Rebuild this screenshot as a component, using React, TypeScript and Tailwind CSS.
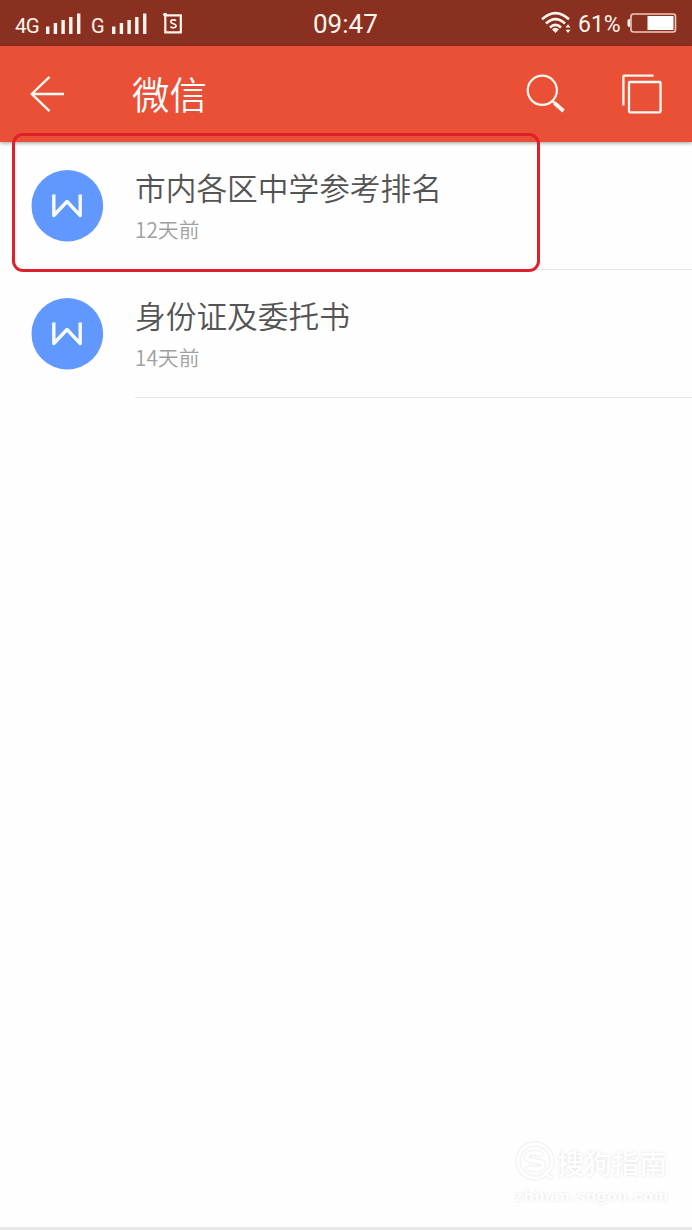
import React from 'react'

const FILES = [
  { name: '市内各区中学参考排名', time: '12天前' },
  { name: '身份证及委托书', time: '14天前' },
]

const SignalBars: React.FC = () => (
  <svg width="35" height="22" viewBox="0 0 35 22" fill="#fff5ec" className="shrink-0">
    <rect x="0" y="13.5" width="3.4" height="7.5" />
    <rect x="7.7" y="10" width="3.4" height="11" />
    <rect x="15.4" y="7" width="3.4" height="14" />
    <rect x="23.1" y="4" width="3.4" height="17" />
    <rect x="31" y="0.5" width="3.4" height="20.5" />
  </svg>
)

const StatusBar: React.FC = () => (
  <div className="flex h-[46px] shrink-0 items-center bg-[#8a3021] font-['Roboto','Liberation_Sans',sans-serif] text-[#fff5ec]">
    <div className="flex w-[313px] items-center pl-[15px] pt-[2px]">
      <span className="w-[31px] pt-[4px] text-[20.5px] leading-none tracking-[-0.7px]">4G</span>
      <SignalBars />
      <span className="ml-[10px] w-[21px] pt-[4px] text-[20px] leading-none">G</span>
      <SignalBars />
      <svg width="20" height="22" viewBox="0 0 20 22" fill="none" stroke="#fff5ec" className="ml-[16px]">
        <path d="M0 1.5H4M2.3 0V19.3H17.8V2.3H1" strokeWidth="2.2" />
        <path d="M13 7.8C12 6.5 7.8 6.3 7.8 8.8C7.8 11.4 13 10 13 12.8C13 15.4 8.6 15.2 7.4 13.6" strokeWidth="1.7" />
      </svg>
    </div>
    <div className="w-[228px] pt-[1px] text-[26px] leading-none">09:47</div>
    <div className="flex items-center">
      <svg width="31" height="24" viewBox="0 0 31 24" fill="none" stroke="#fff5ec" strokeWidth="2.7">
        <path d="M1 8.3Q14.5 -4 28 8.3" />
        <path d="M5 12.4Q14.5 3.8 24 12.4" />
        <path d="M9 16.4Q14.5 11.5 20 16.4" />
        <path d="M11 18.2Q14.5 15.2 18 18.2L14.5 22Z" fill="#fff5ec" stroke="none" />
        <path d="M24.5 16.5L27 13.3L29.5 16.5ZM24.5 18.8H29.5L27 22Z" fill="#fff5ec" stroke="none" />
      </svg>
      <span className="ml-[6px] w-[49px] pt-[3px] text-[23px] leading-none">61%</span>
      <svg width="50" height="22" viewBox="0 0 50 22" className="-mt-[1px]">
        <path d="M3 7H2.5Q0.5 7 0.5 9V13Q0.5 15 2.5 15H3Z" fill="#fff5ec" />
        <rect x="4" y="2" width="44.5" height="18" rx="2.5" fill="none" stroke="#f4c9ba" strokeWidth="1.6" />
        <rect x="20.5" y="4" width="26" height="14" fill="#fff" />
      </svg>
    </div>
  </div>
)

const TitleBar: React.FC = () => (
  <header className="z-10 flex h-[96px] shrink-0 items-center bg-[#ea5036] text-white shadow-[0_1px_4px_rgba(0,0,0,0.4)]">
    <svg width="36" height="38" viewBox="0 0 36 38" fill="none" stroke="#fff8f2" strokeWidth="2.4" className="ml-[30px]">
      <path d="M19.5 1.8L1.8 19L19.5 36.2M1.8 19H34" />
    </svg>
    <h1 className="ml-[66px] w-[394px] pb-[3px] text-[37.5px] font-[350] leading-none">微信</h1>
    <svg width="42" height="42" viewBox="0 0 42 42" fill="none" stroke="#fff8f2" className="-ml-[1px]">
      <circle cx="17.3" cy="17.3" r="14.6" strokeWidth="2.2" />
      <path d="M27 27.5L31 31.5" strokeWidth="2.4" />
      <path d="M29.5 30L38.5 38" strokeWidth="3.8" />
    </svg>
    <svg width="42" height="42" viewBox="0 0 42 42" fill="none" stroke="#fff8f2" strokeWidth="2.3" className="ml-[54px]">
      <path d="M32.5 2.6H3Q2.4 2.6 2.4 3.4V32.5" />
      <rect x="8" y="9" width="31.5" height="30.3" rx="1" />
    </svg>
  </header>
)

const FileRow: React.FC<{ name: string; time: string }> = ({ name, time }) => (
  <li className="flex h-[128px] pl-[31px]">
    <svg width="72" height="72" viewBox="0 0 72 72" fill="none" className="mt-[28px] shrink-0">
      <circle cx="36.3" cy="35.8" r="35.8" fill="#6098ff" />
      <path d="M22.8 24.5V45.5L36 31.5L49.2 45.5V24.5" stroke="#f8fbff" strokeWidth="3.4" strokeLinejoin="round" />
    </svg>
    <div className="ml-[32px] flex-1 border-b border-[#e6e6e6] pt-[25px]">
      <div className="text-[30.7px] font-[350] leading-[40px] text-[#545454]">{name}</div>
      <div className="mt-[8px] text-[20.8px] font-[350] leading-[28px] text-[#a0a0a0]">{time}</div>
    </div>
  </li>
)

const Watermark: React.FC = () => (
  <div className="mr-[23px] mb-[21px] flex w-[154px] flex-col self-end text-white [text-shadow:0_0_3px_#dedede]">
    <div className="flex items-center">
      <svg width="40" height="42" viewBox="0 0 40 42" fill="none" className="shrink-0 drop-shadow-[0_0_1px_#dadada]">
        <circle cx="20" cy="20" r="17" stroke="#fff" strokeWidth="3" />
        <path d="M27 14C23 10.5 12 11.5 12 16C12 21.5 28 18.5 28 24C28 29 16 29.5 12 26" stroke="#fff" strokeWidth="4" />
        <path d="M32 34L37 37" stroke="#fff" strokeWidth="3" />
      </svg>
      <span className="ml-[2px] whitespace-nowrap text-[27.5px] font-medium leading-[42px]">搜狗指南</span>
    </div>
    <div className="whitespace-nowrap pt-[3px] font-['Liberation_Sans',sans-serif] text-[15px] font-bold leading-[20px] tracking-[1.4px]">
      zhinan.sogou.com
    </div>
  </div>
)

export default function App() {
  return (
    <div className="relative flex h-[1230px] w-[692px] flex-col overflow-hidden bg-[#fefefe] font-['Noto_Sans_CJK_SC',sans-serif]">
      <StatusBar />
      <TitleBar />
      <ul className="flex-1">
        {FILES.map((file) => (
          <FileRow key={file.name} {...file} />
        ))}
      </ul>
      <Watermark />
      <div className="h-[3px] shrink-0 bg-[#e9e9e9]" />

      {/* highlight around the first file */}
      <div className="absolute left-[12px] top-[133px] z-20 h-[139px] w-[528px] rounded-[11px] border-[3px] border-[#e01f2d]" />
    </div>
  )
}
